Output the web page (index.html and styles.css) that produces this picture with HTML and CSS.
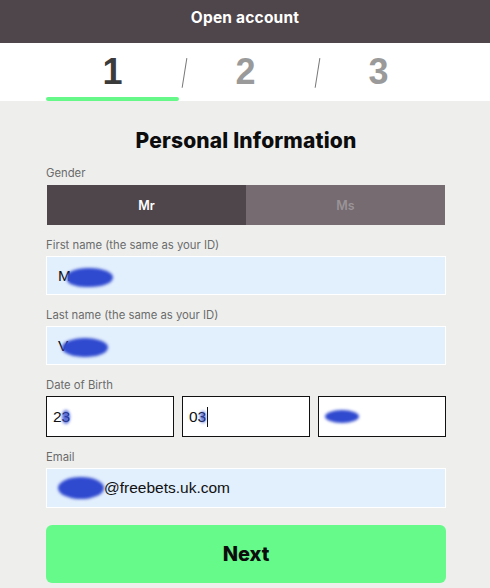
FILE: index.html
```html
<!DOCTYPE html>
<html lang="en">
<head>
<meta charset="utf-8">
<title>Open account</title>
<link rel="stylesheet" href="styles.css">
</head>
<body>
<header class="topbar">Open account</header>
<nav class="steps">
  <div class="step active"><span class="num">1</span><span class="bar"></span></div>
  <div class="sep"><span class="slash"></span></div>
  <div class="step"><span class="num">2</span></div>
  <div class="sep"><span class="slash"></span></div>
  <div class="step"><span class="num">3</span></div>
</nav>
<main class="form">
  <h1 class="title">Personal Information</h1>
  <div class="field first">
    <div class="label">Gender</div>
    <div class="toggle">
      <div class="opt on">Mr</div>
      <div class="opt off">Ms</div>
    </div>
  </div>
  <div class="field">
    <div class="label">First name (the same as your ID)</div>
    <div class="input"><span class="val">M</span><span class="blob b1"></span></div>
  </div>
  <div class="field">
    <div class="label">Last name (the same as your ID)</div>
    <div class="input"><span class="val">V</span><span class="blob b2"></span></div>
  </div>
  <div class="field">
    <div class="label">Date of Birth</div>
    <div class="dob">
      <div class="box"><span class="val">23</span><span class="blob b3"></span></div>
      <div class="box"><span class="val">03</span><span class="caret"></span><span class="blob b4"></span></div>
      <div class="box"><span class="blob b5"></span></div>
    </div>
  </div>
  <div class="field">
    <div class="label">Email</div>
    <div class="input email"><span class="blob b6"></span><span class="val">@freebets.uk.com</span></div>
  </div>
  <button class="next">Next</button>
</main>
</body>
</html>
```
FILE: styles.css
```css
* { box-sizing: border-box; }
html, body { margin: 0; padding: 0; }
body {
  width: 490px;
  height: 588px;
  overflow: hidden;
  background: #eeefed;
  font-family: "Inter", "Lato", "Liberation Sans", sans-serif;
}
.topbar {
  height: 43px;
  background: #4f464b;
  color: #fff;
  font-weight: 700;
  font-size: 15.5px;
  letter-spacing: 0.2px;
  line-height: 36px;
  text-align: center;
}
.steps {
  height: 58px;
  background: #fff;
  display: flex;
  padding-left: 46px;
}
.step {
  width: 133px;
  display: flex;
  flex-direction: column;
  align-items: center;
}
.num {
  font-family: "Liberation Sans", Arial, sans-serif;
  font-weight: 700;
  font-size: 36px;
  line-height: 30px;
  margin-top: 14px;
  height: 40px;
  color: #9a9a9a;
}
.step.active .num { color: #3b3b3b; }
.bar {
  width: 133px;
  height: 4px;
  border-radius: 2px;
  background: #66f98a;
}
.sep { width: 0; display: flex; }
.slash {
  display: block;
  width: 1.3px;
  height: 30px;
  margin-top: 15px;
  margin-left: 5px;
  background: #777;
  transform: rotate(9deg);
  flex: none;
}
.form {
  width: 400px;
  margin-left: 46px;
  padding-top: 28px;
}
.title {
  margin: 0 0 13px;
  font-size: 21px;
  letter-spacing: 0.15px;
  line-height: 24px;
  font-weight: 800;
  color: #0d0d0d;
  text-align: center;
}
.field { margin-top: 13px; }
.field.first { margin-top: 0; }
.label {
  font-size: 11.3px;
  line-height: 14px;
  color: #6b6b6b;
  margin-bottom: 4px;
}
.field.first .label { margin-bottom: 5px; }
.toggle {
  display: flex;
  height: 40px;
  margin-left: 1px;
  margin-right: 1px;
}
.opt {
  flex: 1;
  display: flex;
  align-items: center;
  justify-content: center;
  font-size: 12.5px;
  font-weight: 600;
}
.opt.on { background: #4f464b; color: #fff; }
.opt.off { background: #756b70; color: #9a9397; }
.input {
  height: 39px;
  background: #e2effd;
  border: 1px solid #fff;
  display: flex;
  align-items: center;
  padding-left: 11px;
  font-family: "Liberation Sans", Arial, sans-serif;
  font-size: 15.5px;
  color: #111;
}
.input.email { height: 40px; }
.val { position: relative; z-index: 0; }
.blob {
  display: inline-block;
  background: #2f49cf;
  border-radius: 50%;
  filter: blur(1.5px);
}
.b1 { width: 46px; height: 19px; margin-left: -4px; margin-top: 3px; border-radius: 45% 50% 50% 40%; }
.b2 { width: 46px; height: 19px; margin-left: -6px; margin-top: 4px; }
.b3 { width: 8px; height: 14px; margin-left: -8px; opacity: 0.8; }
.b4 { width: 6px; height: 12px; margin-left: -8px; opacity: 0.7; }
.b5 { width: 34px; height: 13px; }
.b6 { width: 46px; height: 22px; }
.dob {
  display: flex;
  gap: 8px;
}
.box {
  flex: 1;
  height: 41px;
  background: #fff;
  border: 1.6px solid #111;
  display: flex;
  align-items: center;
  padding-left: 6px;
  font-family: "Liberation Sans", Arial, sans-serif;
  font-size: 15.5px;
  color: #111;
}
.caret {
  display: inline-block;
  width: 1px;
  height: 20px;
  background: #111;
  margin-left: 1px;
}
.next {
  display: block;
  width: 400px;
  height: 58px;
  margin-top: 17px;
  border: 0;
  border-radius: 6px;
  background: #66fa8b;
  font-family: "Inter", "Lato", "Liberation Sans", sans-serif;
  font-weight: 800;
  font-size: 20px;
  color: #0d0d0d;
  padding: 0;
}
```
